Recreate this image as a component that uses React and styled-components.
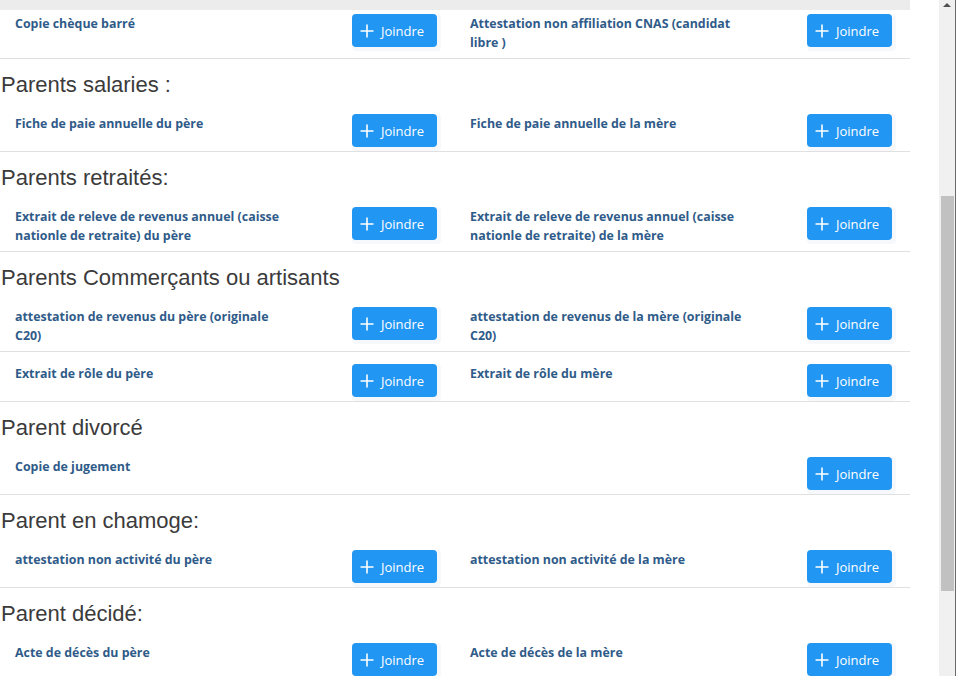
import React from 'react'
import styled, { createGlobalStyle } from 'styled-components'

// pièces justificatives par situation des parents
const sections = [
  {
    rows: [['Copie chèque barré', 'Attestation non affiliation CNAS (candidat libre )']],
  },
  {
    title: 'Parents salaries :',
    rows: [['Fiche de paie annuelle du père', 'Fiche de paie annuelle de la mère']],
  },
  {
    title: 'Parents retraités:',
    rows: [
      [
        'Extrait de releve de revenus annuel (caisse nationle de retraite) du père',
        'Extrait de releve de revenus annuel (caisse nationle de retraite) de la mère',
      ],
    ],
  },
  {
    title: 'Parents Commerçants ou artisants',
    rows: [
      [
        'attestation de revenus du père (originale C20)',
        'attestation de revenus de la mère (originale C20)',
      ],
      ['Extrait de rôle du père', 'Extrait de rôle du mère'],
    ],
  },
  {
    title: 'Parent divorcé',
    rows: [['Copie de jugement', null]],
    single: true,
  },
  {
    title: 'Parent en chamoge:',
    rows: [['attestation non activité du père', 'attestation non activité de la mère']],
  },
  {
    title: 'Parent décidé:',
    rows: [['Acte de décès du père', 'Acte de décès de la mère']],
  },
]

const GlobalStyle = createGlobalStyle`
  html, body {
    margin: 0;
    padding: 0;
    overflow: hidden;
    background: #ffffff;
  }
`

const PlusIcon = () => (
  <svg width="14" height="14" viewBox="0 0 14 14">
    <path d="M7 0.5V13.5M0.5 7H13.5" stroke="#ffffff" strokeWidth="1.6" />
  </svg>
)

const Document = ({ label, cut }) => (
  <Cell>
    <Label $cut={cut}>{label}</Label>
    <ButtonWrap $cut={cut}>
      <JoinButton>
        <PlusIcon />
        Joindre
      </JoinButton>
    </ButtonWrap>
  </Cell>
)

const App = () => {
  return (
    <Window>
      <GlobalStyle />
      <Page>
        <TopBar />
        {sections.map((section, i) => (
          <div key={i}>
            {section.title && <Heading>{section.title}</Heading>}
            {section.rows.map((row, j) => (
              <Row key={j}>
                {section.single ? (
                  <>
                    <Cell>
                      <Label>{row[0]}</Label>
                    </Cell>
                    <Document label="" />
                  </>
                ) : (
                  row.map((label, k) => (
                    <Document key={k} label={label} cut={i === 0} />
                  ))
                )}
              </Row>
            ))}
          </div>
        ))}
      </Page>
      <Scrollbar>
        <Arrow />
        <Thumb />
      </Scrollbar>
    </Window>
  )
}

const Window = styled.div`
  display: flex;
  width: 957px;
  height: 676px;
  overflow: hidden;
`
const Page = styled.div`
  width: 910px;
  margin-right: 29px;
  flex-shrink: 0;
`
const TopBar = styled.div`
  height: 10px;
  background: #ececec;
`
const Heading = styled.h2`
  margin: 0;
  padding: 13px 0 5px 1px;
  height: 25px;
  font-family: 'Liberation Sans', Arial, sans-serif;
  font-size: 22px;
  font-weight: normal;
  line-height: 25px;
  color: #3b3b3b;
`
const Row = styled.div`
  display: grid;
  grid-template-columns: 455px 455px;
  border-bottom: 1px solid #e0e0e0;
`
const Cell = styled.div`
  display: flex;
  align-items: flex-start;
`
const Label = styled.div`
  width: 278px;
  padding: ${(p) => (p.$cut ? '4px' : '12px')} 59px 6px 15px;
  font-family: 'Open Sans', 'Noto Sans', sans-serif;
  font-size: 12.4px;
  font-weight: 700;
  line-height: 19px;
  color: #2f5b89;
`
const ButtonWrap = styled.div`
  margin-top: ${(p) => (p.$cut ? '4px' : '12px')};
  padding: 0 4px 4px 0;
  background: #f6f8fb;
  border-radius: 4px;
`
const JoinButton = styled.button`
  display: flex;
  align-items: center;
  gap: 7px;
  width: 85px;
  height: 33px;
  padding: 0 0 0 8px;
  border: none;
  border-radius: 4px;
  background: #2196f3;
  color: #ffffff;
  font-family: 'Open Sans', 'Noto Sans', sans-serif;
  font-size: 13px;
  cursor: pointer;
`
const Scrollbar = styled.div`
  position: relative;
  width: 17px;
  height: 676px;
  background: #f0f0f0;
  border-right: 1px solid #6b6b6b;
  box-sizing: border-box;
`
const Arrow = styled.div`
  position: absolute;
  top: 3px;
  left: 4px;
  width: 0;
  height: 0;
  border-left: 4px solid transparent;
  border-right: 4px solid transparent;
  border-bottom: 4px solid #505050;
`
const Thumb = styled.div`
  position: absolute;
  top: 196px;
  left: 2px;
  width: 13px;
  height: 395px;
  background: #c1c1c1;
`

export default App
